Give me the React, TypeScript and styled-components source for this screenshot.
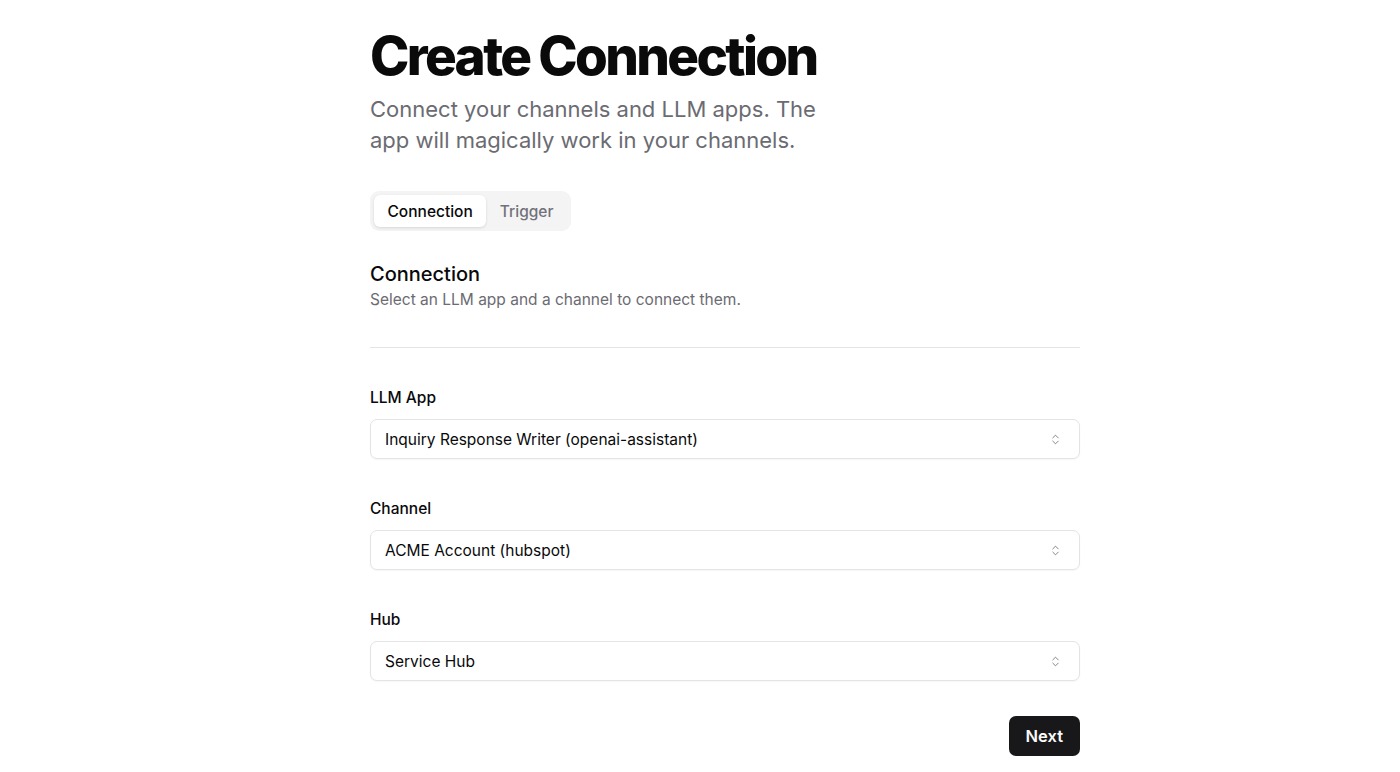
import React, { useState } from "react";
import styled, { createGlobalStyle } from "styled-components";
import { ChevronsUpDown } from "lucide-react";

const GlobalStyle = createGlobalStyle`
  html, body {
    margin: 0;
    padding: 0;
    background: #ffffff;
    font-family: Inter, "Noto Sans", sans-serif;
    color: #09090b;
  }
`;

const fields = [
  { label: "LLM App", value: "Inquiry Response Writer (openai-assistant)" },
  { label: "Channel", value: "ACME Account (hubspot)" },
  { label: "Hub", value: "Service Hub" },
];

export default function App() {
  let [tab, setTab] = useState("connection");
  return (
    <>
      <GlobalStyle />
      <StyledPage>
        <StyledColumn>
          <StyledTitle>Create Connection</StyledTitle>
          <StyledLead>
            Connect your channels and LLM apps. The app will magically work in
            your channels.
          </StyledLead>
          <StyledTabs>
            <StyledTab $active={tab === "connection"} onClick={() => setTab("connection")}>
              Connection
            </StyledTab>
            <StyledTab $active={tab === "trigger"} onClick={() => setTab("trigger")}>
              Trigger
            </StyledTab>
          </StyledTabs>
          <StyledSectionHead>
            <h2>Connection</h2>
            <p>Select an LLM app and a channel to connect them.</p>
          </StyledSectionHead>
          <StyledDivider />
          <StyledForm>
            {fields.map((field) => (
              <StyledField key={field.label}>
                <StyledLabel>{field.label}</StyledLabel>
                <StyledSelect type="button">
                  <span>{field.value}</span>
                  <ChevronsUpDown size={13} strokeWidth={1.6} color="#71717a" />
                </StyledSelect>
              </StyledField>
            ))}
          </StyledForm>
          <StyledActions>
            <StyledButton type="button">Next</StyledButton>
          </StyledActions>
        </StyledColumn>
      </StyledPage>
    </>
  );
}

const StyledPage = styled.div`
  display: flex;
  justify-content: center;
  padding: 26px 0 16px;
`;
const StyledColumn = styled.div`
  width: 710px;
  margin-left: 50px;
  display: flex;
  flex-direction: column;
`;
const StyledTitle = styled.h1`
  margin: 0;
  font-size: 53px;
  line-height: 60px;
  font-weight: 800;
  letter-spacing: -0.05em;
  color: #0a0a0a;
`;
const StyledLead = styled.p`
  margin: 8px 0 0;
  max-width: 460px;
  font-size: 22px;
  line-height: 31px;
  color: #6b6b72;
`;
const StyledTabs = styled.div`
  align-self: flex-start;
  display: flex;
  margin-top: 35px;
  padding: 4px;
  border-radius: 9px;
  background: #f4f4f5;
`;
const StyledTab = styled.button<{ $active?: boolean }>`
  border: none;
  height: 32px;
  padding: 0 13.5px;
  border-radius: 6px;
  font-family: inherit;
  font-size: 15.5px;
  font-weight: 500;
  cursor: pointer;
  background: ${(p) => (p.$active ? "#ffffff" : "transparent")};
  color: ${(p) => (p.$active ? "#09090b" : "#71717a")};
  box-shadow: ${(p) => (p.$active ? "0 1px 3px rgba(0,0,0,0.12)" : "none")};
`;
const StyledSectionHead = styled.div`
  margin-top: 30px;
  h2 {
    margin: 0;
    font-size: 20px;
    line-height: 26px;
    font-weight: 500;
    color: #09090b;
  }
  p {
    margin: 2px 0 0;
    font-size: 15.5px;
    line-height: 22px;
    color: #6b6b72;
  }
`;
const StyledDivider = styled.hr`
  margin: 36px 0 0;
  border: none;
  border-top: 1px solid #e4e4e7;
  width: 100%;
`;
const StyledForm = styled.div`
  display: flex;
  flex-direction: column;
  gap: 39px;
  margin-top: 39px;
`;
const StyledField = styled.div`
  display: flex;
  flex-direction: column;
  gap: 10px;
`;
const StyledLabel = styled.label`
  font-size: 15.5px;
  line-height: 22px;
  font-weight: 500;
  color: #09090b;
`;
const StyledSelect = styled.button`
  display: flex;
  align-items: center;
  justify-content: space-between;
  width: 100%;
  height: 40px;
  padding: 0 17px 0 14px;
  border: 1px solid #e4e4e7;
  border-radius: 7px;
  background: #ffffff;
  box-shadow: 0 1px 2px rgba(0, 0, 0, 0.04);
  font-family: inherit;
  font-size: 15.5px;
  color: #09090b;
  text-align: left;
  cursor: pointer;
`;
const StyledActions = styled.div`
  display: flex;
  justify-content: flex-end;
  margin-top: 35px;
`;
const StyledButton = styled.button`
  height: 40px;
  padding: 0 17px;
  border: none;
  border-radius: 7px;
  background: #18181b;
  color: #fafafa;
  font-family: inherit;
  font-size: 16.5px;
  font-weight: 600;
  cursor: pointer;
`;
